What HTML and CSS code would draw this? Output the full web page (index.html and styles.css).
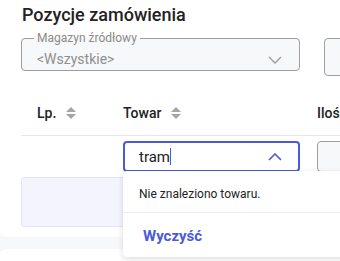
FILE: index.html
```html
<!DOCTYPE html>
<html lang="pl">

<head>
    <meta charset="UTF-8">
    <meta name="viewport" content="width=device-width, initial-scale=1.0">
    <title>Pozycje zamówienia</title>
    <link rel="stylesheet" href="styles.css">
</head>

<body>
    <section class="order-card">
        <h2 class="card-title">Pozycje zamówienia</h2>

        <div class="filters">
            <fieldset class="select-field">
                <legend>Magazyn źródłowy</legend>
                <span class="select-value">&lt;Wszystkie&gt;</span>
                <svg class="chevron" width="14" height="8" viewBox="0 0 14 8">
                    <path d="M1 1 L7 7 L13 1" fill="none" stroke="#9a9a9a" stroke-width="1.3" />
                </svg>
            </fieldset>
            <div class="select-field narrow"></div>
        </div>

        <div class="items-table">
            <div class="table-head">
                <div class="th first">Lp. <span class="sort"></span></div>
                <div class="th">Towar <span class="sort"></span></div>
                <div class="th">Iloś</div>
            </div>

            <div class="table-row">
                <div class="td first"></div>
                <div class="td">
                    <div class="combo">
                        <span class="combo-text">tram</span><span class="caret"></span>
                        <svg class="chevron" width="14" height="8" viewBox="0 0 14 8">
                            <path d="M1 7 L7 1 L13 7" fill="none" stroke="#4a5ad8" stroke-width="1.6" />
                        </svg>
                    </div>
                    <div class="combo-menu">
                        <p class="menu-empty">Nie znaleziono towaru.</p>
                        <button class="menu-clear" type="button">Wyczyść</button>
                    </div>
                </div>
                <div class="td">
                    <div class="qty-input"></div>
                </div>
            </div>

            <div class="table-row">
                <div class="add-row"></div>
            </div>
        </div>
    </section>
    <div class="next-card"></div>
</body>

</html>
```

FILE: styles.css
```css
html,
body {
    overflow: hidden;
}

body {
    margin: 0;
    background-color: #f7f8fa;
    font-family: Roboto, "Liberation Sans", sans-serif;
    color: #222;
}

.order-card {
    background-color: #fff;
    height: 237px;
    padding-left: 21px;
    border-radius: 0 0 6px 6px;
    box-sizing: border-box;
}

.card-title {
    margin: 0;
    padding: 3px 0 0 1px;
    font-size: 18px;
    font-weight: 500;
    line-height: 24px;
    color: #222;
}

.filters {
    display: flex;
    gap: 24px;
    margin-top: 6px;
}

.select-field {
    position: relative;
    width: 279px;
    height: 38px;
    margin: 0;
    padding: 0 15px;
    box-sizing: border-box;
    border: 1px solid #9e9e9e;
    border-radius: 4px;
    background-color: #f7f8fa;
    flex-shrink: 0;
}

.select-field legend {
    padding: 0 3px;
    margin-left: -3px;
    font-size: 12px;
    line-height: 10px;
    color: #8a8a8a;
}

.select-value {
    display: block;
    margin-top: 7px;
    font-size: 14px;
    line-height: 18px;
    color: #8f8f8f;
}

.select-field .chevron {
    position: absolute;
    right: 17px;
    top: 13px;
}

.select-field.narrow {
    width: 60px;
    margin-top: 5px;
    height: 38px;
}

.items-table {
    margin-top: 19px;
}

.table-head {
    display: grid;
    grid-template-columns: 102px 177px 17px 60px;
    border-bottom: 1px solid #e4e4f2;
    height: 40px;
    align-items: center;
}

.th {
    font-size: 14px;
    font-weight: 500;
    display: flex;
    align-items: center;
    gap: 10px;
    white-space: nowrap;
    margin-top: -4px;
    color: #222;
}

.th:last-child {
    grid-column: 4;
}

.th.first {
    padding-left: 16px;
}

.sort {
    display: inline-block;
    width: 10px;
    height: 12px;
    position: relative;
}

.sort::before,
.sort::after {
    content: "";
    position: absolute;
    left: 0;
    border-left: 5px solid transparent;
    border-right: 5px solid transparent;
}

.sort::before {
    top: 0;
    border-bottom: 5px solid #a5a5a5;
}

.sort::after {
    bottom: 0;
    border-top: 5px solid #a5a5a5;
}

.table-row {
    display: grid;
    grid-template-columns: 102px 177px 17px 60px;
}

.table-row:nth-child(2) {
    padding-top: 5px;
}

.td {
    position: relative;
}

.td:last-child {
    grid-column: 4;
}

.combo {
    position: relative;
    height: 31px;
    box-sizing: border-box;
    border: 2px solid #4a5ad8;
    border-radius: 4px;
    padding-left: 14px;
    display: flex;
    align-items: center;
}

.combo-text {
    font-size: 15px;
    color: #222;
}

.caret {
    display: inline-block;
    width: 1px;
    height: 17px;
    background-color: #4a5ad8;
}

.combo .chevron {
    position: absolute;
    right: 16px;
    top: 10px;
}

.combo-menu {
    position: absolute;
    top: 30px;
    left: 0;
    width: 240px;
    height: 86px;
    background-color: #fff;
    border-radius: 4px;
    box-shadow: 0 2px 6px rgba(0, 0, 0, 0.14);
    z-index: 2;
}

.menu-empty {
    margin: 0;
    padding: 15px 16px 0;
    height: 26px;
    border-bottom: 1px solid #eeeeee;
    font-size: 12px;
    line-height: 16px;
    color: #222;
}

.menu-clear {
    display: block;
    border: none;
    background: none;
    padding: 14px 0 0 20px;
    font-family: inherit;
    font-size: 15px;
    font-weight: 700;
    color: #4a5ad8;
}

.qty-input {
    height: 31px;
    box-sizing: border-box;
    border: 1px solid #9e9e9e;
    border-radius: 4px;
    background-color: #f7f8fa;
    width: 60px;
}

.add-row {
    grid-column: 1 / 3;
    margin-top: 5px;
    height: 50px;
    box-sizing: border-box;
    border: 1px solid #e4e4f8;
    border-radius: 3px;
    background-color: #f4f4fd;
}

.next-card {
    margin-top: 12px;
    height: 40px;
    background-color: #fff;
    border-radius: 6px 6px 0 0;
}
```
